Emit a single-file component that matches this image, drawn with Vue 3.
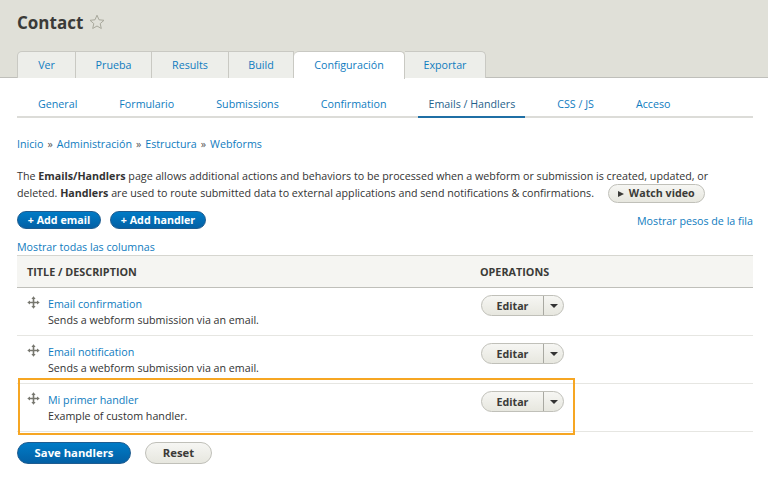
<template>
  <div class="page">
    <header class="head">
      <h1 class="title">
        Contact
        <svg class="star" width="16" height="16" viewBox="0 0 16 16">
          <path d="M8 1.2l2 4.6 5 .5-3.8 3.3 1.1 4.9L8 12l-4.3 2.5 1.1-4.9L1 6.3l5-.5z" fill="none" stroke="#a8a89c" stroke-width="1" />
        </svg>
      </h1>
      <nav class="tabs">
        <a v-for="t in tabs" :key="t" class="tab" :class="{ active: t === 'Configuración' }">{{ t }}</a>
      </nav>
    </header>

    <main class="content">
      <nav class="subtabs">
        <a v-for="s in subtabs" :key="s.label" class="subtab" :class="{ active: s.active }">{{ s.label }}</a>
      </nav>

      <div class="crumbs">
        <template v-for="(c, i) in crumbs" :key="c">
          <span v-if="i" class="sep">»</span>
          <a>{{ c }}</a>
        </template>
      </div>

      <p class="intro">
        The <b>Emails/Handlers</b> page allows additional actions and behaviors to be processed when a webform or submission is created, updated, or<br />
        deleted. <b>Handlers</b> are used to route submitted data to external applications and send notifications &amp; confirmations.
        <button class="btn video"><span class="play"></span>Watch video</button>
      </p>

      <div class="actions">
        <button class="btn primary small">+ Add email</button>
        <button class="btn primary small">+ Add handler</button>
        <a class="weights">Mostrar pesos de la fila</a>
      </div>

      <a class="show-cols">Mostrar todas las columnas</a>

      <div class="table-wrap">
        <table class="handlers">
          <thead>
            <tr>
              <th class="col-title">TITLE / DESCRIPTION</th>
              <th>OPERATIONS</th>
            </tr>
          </thead>
          <tbody>
            <tr v-for="r in rows" :key="r.name">
              <td>
                <div class="cell-title">
                  <svg class="drag" width="13" height="13" viewBox="0 0 13 13">
                    <path d="M6.5 0.3L8.6 3H7.3V5.7H10V4.4L12.7 6.5L10 8.6V7.3H7.3V10H8.6L6.5 12.7L4.4 10H5.7V7.3H3V8.6L0.3 6.5L3 4.4V5.7H5.7V3H4.4z" fill="#77776f" />
                  </svg>
                  <div>
                    <a>{{ r.name }}</a>
                    <div class="desc">{{ r.desc }}</div>
                  </div>
                </div>
              </td>
              <td class="cell-ops">
                <div class="dropbutton">
                  <span class="drop-main">Editar</span>
                  <span class="drop-toggle"><i></i></span>
                </div>
              </td>
            </tr>
          </tbody>
        </table>
        <div class="highlight"></div>
      </div>

      <div class="form-actions">
        <button class="btn primary big">Save handlers</button>
        <button class="btn big reset">Reset</button>
      </div>
    </main>
  </div>
</template>

<script setup>
const tabs = ['Ver', 'Prueba', 'Results', 'Build', 'Configuración', 'Exportar']

const subtabs = [
  { label: 'General' },
  { label: 'Formulario' },
  { label: 'Submissions' },
  { label: 'Confirmation' },
  { label: 'Emails / Handlers', active: true },
  { label: 'CSS / JS' },
  { label: 'Acceso' }
]

const crumbs = ['Inicio', 'Administración', 'Estructura', 'Webforms']

const rows = [
  { name: 'Email confirmation', desc: 'Sends a webform submission via an email.' },
  { name: 'Email notification', desc: 'Sends a webform submission via an email.' },
  { name: 'Mi primer handler', desc: 'Example of custom handler.' }
]
</script>

<style>
body {
  background: #fff;
}
</style>

<style scoped>
.page {
  width: 768px;
  height: 481px;
  overflow: hidden;
  font-family: "Open Sans", "Noto Sans", sans-serif;
  font-size: 10.7px;
  line-height: 17px;
  color: #333;
}

a {
  color: #0f7cc0;
  text-decoration: none;
}

/* header */
.head {
  height: 78px;
  box-sizing: border-box;
  background: #e0e0d8;
  border-bottom: 1px solid #bfbfba;
  padding: 11px 15px 0 17px;
}

.title {
  display: flex;
  align-items: center;
  gap: 6px;
  margin: 0;
  height: 24px;
  font-size: 17px;
  line-height: 24px;
  font-weight: 700;
  color: #3b3b38;
}

.star {
  width: 16px;
  height: 16px;
  margin-top: -2px;
}

.tabs {
  display: flex;
  margin-top: 16px;
  height: 27px;
}

.tab {
  display: flex;
  align-items: center;
  justify-content: center;
  box-sizing: border-box;
  height: 27px;
  background: #edeeea;
  border: 1px solid #c9c9c3;
  border-bottom: none;
  border-left-width: 0;
}

.tab:first-child {
  width: 59px;
  border-left-width: 1px;
  border-top-left-radius: 5px;
}
.tab:nth-child(2) { width: 76px; }
.tab:nth-child(3) { width: 77px; }
.tab:nth-child(4) { width: 65px; }
.tab:nth-child(5) { width: 111px; }
.tab:nth-child(6) {
  width: 81px;
  border-top-right-radius: 5px;
}

.tab.active {
  height: 28px;
  padding-bottom: 1px;
  background: #fff;
  border-top-left-radius: 5px;
  border-top-right-radius: 5px;
}

/* content */
.content {
  padding: 0 15px 0 17px;
}

.subtabs {
  display: flex;
  height: 40px;
  box-sizing: border-box;
  padding-top: 17px;
  border-bottom: 2px solid #dcdcd8;
}

.subtab {
  display: block;
  height: 23px;
  box-sizing: border-box;
  padding: 1px 10px 0;
  margin: 0 11px;
}

.subtab.active {
  color: #1f5f8b;
  border-bottom: 2px solid #1f6fa5;
}

.crumbs {
  margin-top: 18px;
  display: flex;
  gap: 4px;
}

.sep {
  color: #555;
}

.intro {
  margin: 15px 0 0;
  height: 34px;
  white-space: nowrap;
}

b {
  font-weight: 700;
}

.btn {
  font-family: inherit;
  font-weight: 700;
  border: 1px solid #c0c0b9;
  border-radius: 20px;
  background: linear-gradient(#f6f6f3, #e7e7df);
  color: #3b3b38;
  padding: 0;
}

.primary {
  background: linear-gradient(#007bc6, #0360a5);
  border-color: #1e5c90;
  color: #fff;
}

.video {
  width: 97px;
  height: 19px;
  margin: -4px 0 -4px 11px;
  font-size: 10.7px;
  line-height: 16px;
}

.play {
  display: inline-block;
  width: 0;
  height: 0;
  margin-right: 5px;
  border-left: 6px solid #3b3b38;
  border-top: 3px solid transparent;
  border-bottom: 3px solid transparent;
}

.actions {
  display: flex;
  align-items: center;
  gap: 9px;
  height: 18px;
  margin-top: 9px;
}

.small {
  height: 18px;
  font-size: 10.7px;
  line-height: 16px;
}

.small:nth-child(1) { width: 84px; }
.small:nth-child(2) { width: 96px; }

.weights {
  margin-left: auto;
  padding-top: 2px;
}

.show-cols {
  display: block;
  height: 16px;
  margin-top: 10px;
}

.table-wrap {
  position: relative;
}

.handlers {
  width: 100%;
  border-collapse: collapse;
  margin-top: 0;
}

th {
  height: 32px;
  box-sizing: border-box;
  padding: 0 10px;
  background: #f5f5f2;
  border-top: 1px solid #d6d6d0;
  border-bottom: 1px solid #bfbfba;
  text-align: left;
  font-size: 10.8px;
  font-weight: 700;
  color: #3b3b38;
}

.col-title {
  width: 453px;
}

td {
  height: 48px;
  box-sizing: border-box;
  border-bottom: 1px solid #e6e6e2;
  vertical-align: top;
  padding: 0;
}

.cell-title {
  display: flex;
  height: 47px;
  box-sizing: border-box;
  padding: 8px 0 0 10px;
}

.drag {
  margin: 0 8px 0 0;
}

.desc {
  margin-top: -1px;
  color: #333;
}

.cell-ops {
  padding: 7px 0 0 11px;
}

.dropbutton {
  display: inline-flex;
  width: 83px;
  height: 21px;
  box-sizing: border-box;
  border: 1px solid #c0c0b9;
  border-radius: 11px;
  background: linear-gradient(#f6f6f3, #e7e7df);
  font-weight: 700;
  color: #3b3b38;
}

.drop-main {
  flex: 1;
  text-align: center;
  line-height: 20px;
  border-right: 1px solid #a9a9a2;
}

.drop-toggle {
  display: flex;
  align-items: center;
  justify-content: center;
  width: 19px;
}

.drop-toggle i {
  width: 0;
  height: 0;
  border-top: 4px solid #333;
  border-left: 4px solid transparent;
  border-right: 4px solid transparent;
}

.highlight {
  position: absolute;
  left: 1px;
  bottom: -3px;
  width: 557px;
  height: 57px;
  box-sizing: border-box;
  border: 2px solid #f6a623;
  pointer-events: none;
}

.form-actions {
  display: flex;
  gap: 14px;
  margin-top: 10px;
}

.big {
  height: 22px;
  font-size: 11.3px;
  line-height: 20px;
}

.big.primary {
  width: 114px;
}

.reset {
  width: 67px;
}
</style>
